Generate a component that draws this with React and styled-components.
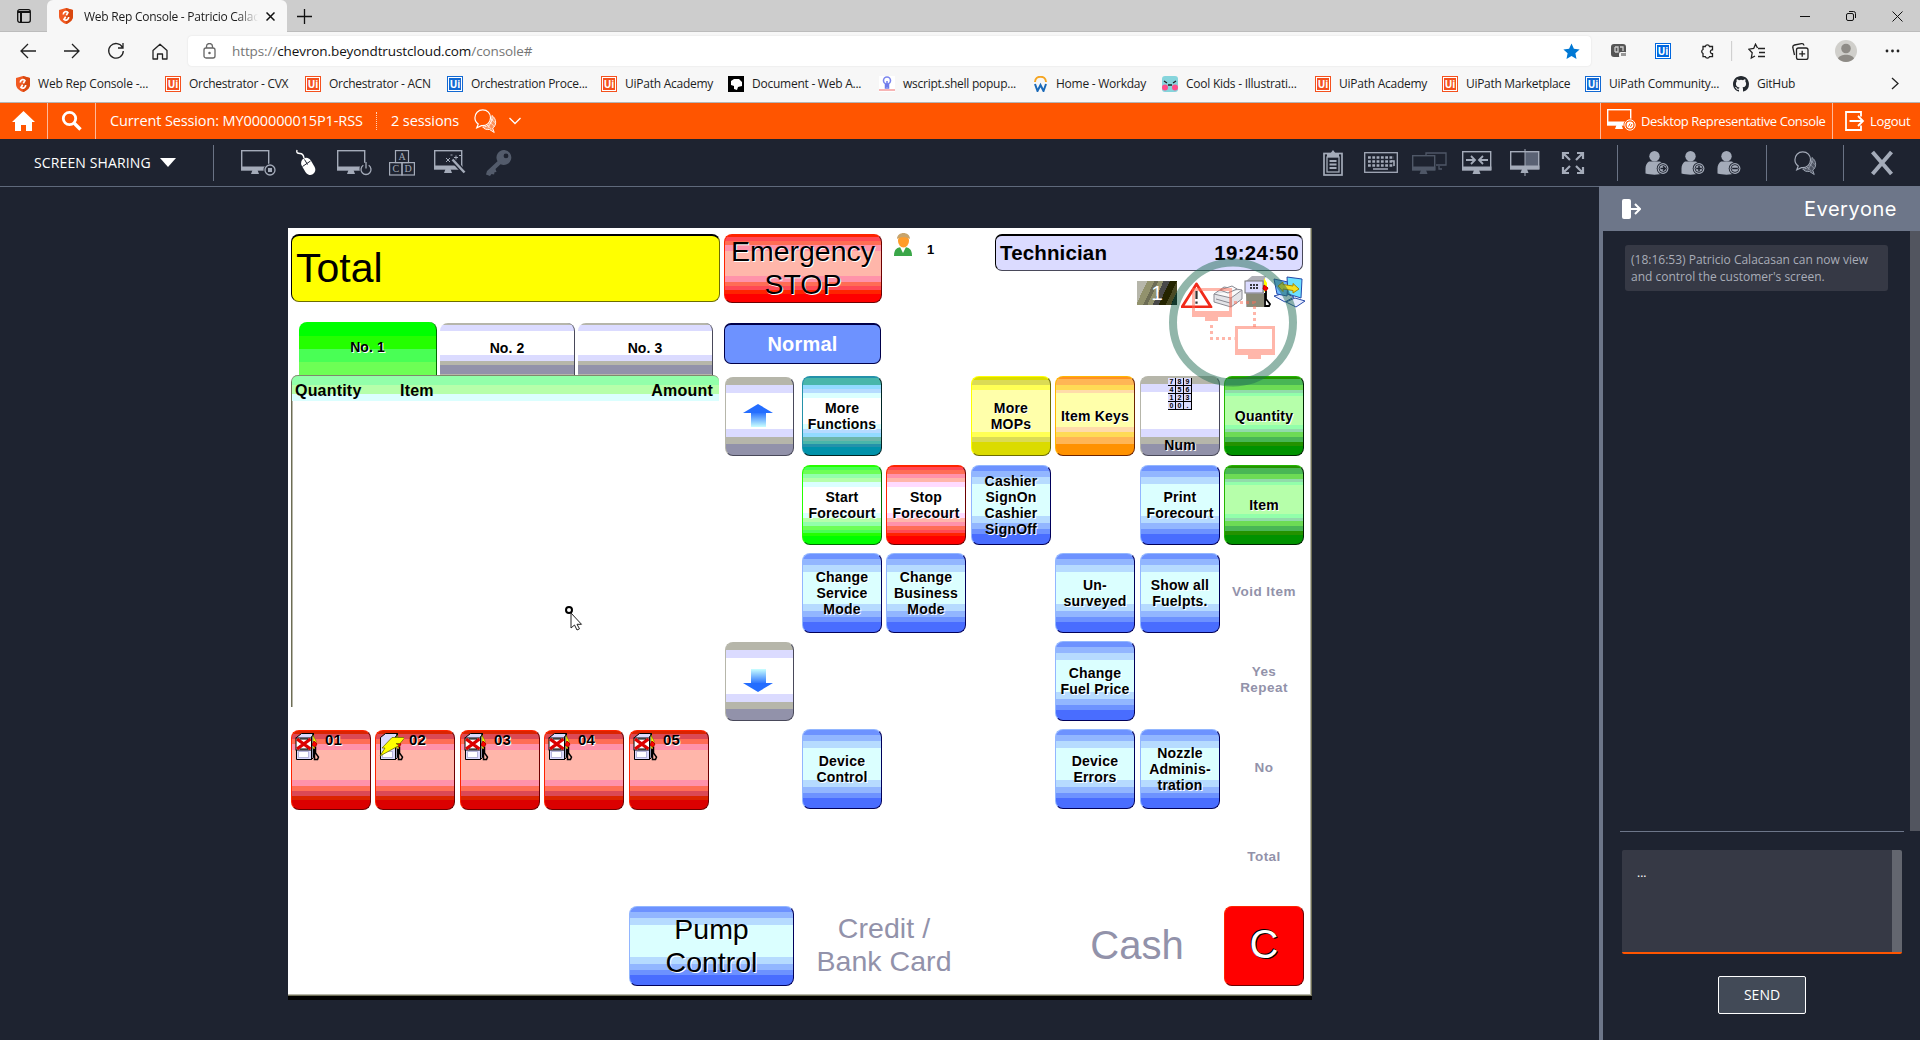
import React from "react";
import styled, { createGlobalStyle, css } from "styled-components";

const Global = createGlobalStyle`
  * { box-sizing: border-box; }
  html, body { margin: 0; padding: 0; background: #1e2330; }
  body { width: 1920px; height: 1040px; overflow: hidden; }
`;

const ui = `"Open Sans", "Noto Sans", sans-serif`;
const arial = `"Liberation Sans", Arial, sans-serif`;

const Page = styled.div`
  display: flex;
  flex-direction: column;
  width: 1920px;
  height: 1040px;
  overflow: hidden;
  font-family: ${ui};
  background: #1e2330;
`;

/* ---------- Browser chrome ---------- */
const TitleBar = styled.div`
  display: flex;
  align-items: flex-end;
  height: 32px;
  background: #cdcdcd;
  box-shadow: inset 0 -1px 0 #bcbcbc;
`;
const TabActions = styled.div`
  display: flex;
  align-items: center;
  justify-content: center;
  width: 47px;
  height: 32px;
`;
const Tab = styled.div`
  display: flex;
  align-items: center;
  width: 240px;
  height: 32px;
  padding: 0 11px 0 12px;
  background: #f7f7f7;
  border-radius: 6px 6px 0 0;
`;
const TabTitle = styled.div`
  width: 174px;
  margin: 0 8px 0 11px;
  white-space: nowrap;
  font-size: 12px;
  letter-spacing: -0.25px;
  color: #1b1b1b;
  mask-image: linear-gradient(90deg, #000 88%, transparent);
`;
const PlusWrap = styled.div`
  display: flex;
  align-items: center;
  height: 32px;
  margin-left: 10px;
`;
const WinControls = styled.div`
  display: flex;
  align-items: center;
  gap: 36px;
  height: 32px;
  margin-left: auto;
  padding-right: 17px;
`;
const NavBar = styled.div`
  display: flex;
  align-items: center;
  height: 38px;
  padding: 0 20px;
  background: #f7f7f7;
`;
const NavButtons = styled.div`
  display: flex;
  align-items: center;
  gap: 27px;
  width: 168px;
`;
const Address = styled.div`
  display: flex;
  align-items: center;
  width: 1403px;
  height: 30px;
  padding: 0 11px 0 15px;
  background: #fff;
  border-radius: 4px;
  box-shadow: 0 0 2px #ddd;
`;
const Url = styled.div`
  flex: 1;
  margin-left: 16px;
  font-size: 13.5px;
  letter-spacing: -0.1px;
  color: #767676;
  b { font-weight: 400; color: #111; }
`;
const Extensions = styled.div`
  display: grid;
  grid-template-columns: 44px 44px 32px 17px 44px 43px 50px 15px;
  align-items: center;
  padding-left: 20px;
`;
const Bookmarks = styled.div`
  display: flex;
  align-items: center;
  height: 33px;
  padding: 0 14px 5px 16px;
  background: #f7f7f7;
  border-bottom: 1px solid #b5b5b5;
`;
const Bookmark = styled.div`
  display: flex;
  align-items: center;
  gap: 8px;
  width: ${(p) => p.$w}px;
  flex: none;
  white-space: nowrap;
  font-size: 12px;
  letter-spacing: ${(p) => p.$ls || -0.25}px;
  color: #1d1d1d;
`;
const UiBadge = styled.div`
  display: flex;
  align-items: center;
  justify-content: center;
  width: 16px;
  height: 16px;
  flex: none;
  border: 1px solid ${(p) => p.$c};
  box-shadow: inset 0 0 0 1px #fff;
  background: ${(p) => p.$c};
  color: #fff;
  font: 700 10px/14px ${ui};
  letter-spacing: 0;
`;

/* ---------- Session bar ---------- */
const OrangeBar = styled.div`
  display: flex;
  align-items: stretch;
  height: 36px;
  background: #ff5500;
  color: #fff;
  font-size: 15px;
`;
const OrangeCell = styled.div`
  display: flex;
  align-items: center;
  justify-content: ${(p) => p.$justify || "center"};
  gap: ${(p) => p.$gap || 0}px;
  width: ${(p) => p.$w}px;
  padding-left: ${(p) => p.$pl || 0}px;
  margin-left: ${(p) => (p.$push ? "auto" : 0)};
  white-space: nowrap;
  font-size: ${(p) => p.$fs || 15}px;
  letter-spacing: ${(p) => p.$ls || 0}px;
  border-right: ${(p) => (p.$line ? "1px solid #ffb899" : "none")};
  border-left: ${(p) => (p.$lineLeft ? "1px solid #ffb899" : "none")};
  padding-bottom: 1px;
  svg { flex: none; overflow: visible; }
`;
const Dotted = styled.div`
  width: 1px;
  height: 18px;
  align-self: center;
  border-left: 1px dotted #ffd0b8;
`;

const ToolBar = styled.div`
  display: flex;
  align-items: center;
  height: 48px;
  border-bottom: 1px solid #5f697b;
  background: #1e2330;
  color: #a4abb9;
`;
const ModeLabel = styled.div`
  display: flex;
  align-items: center;
  gap: 9px;
  width: 213px;
  padding-left: 34px;
  font-size: 14px;
  letter-spacing: 0.12px;
  white-space: nowrap;
  color: #fff;
`;
const Caret = styled.div`
  border: 8px solid transparent;
  border-top: 9px solid #fff;
  border-bottom: 0;
`;
const Divider = styled.div`
  width: 1px;
  height: 36px;
  background: #6a7385;
`;
const ToolGroup = styled.div`
  display: flex;
  align-items: center;
  width: ${(p) => p.$w || "auto"};
  padding-left: ${(p) => p.$pl || 0}px;
  margin-left: ${(p) => (p.$push ? "auto" : 0)};
`;
const Tool = styled.div`
  display: flex;
  align-items: center;
  justify-content: center;
  width: ${(p) => p.$w}px;
  height: 36px;
  flex: none;
  color: ${(p) => p.$c || "#a4abb9"};
  svg { display: block; overflow: visible; }
`;

/* ---------- Main area ---------- */
const Main = styled.div`
  display: flex;
  flex: 1;
  min-height: 0;
`;
const Stage = styled.div`
  width: 1599px;
  padding: 41px 0 0 288px;
`;
const Screen = styled.div`
  position: relative;
  display: flex;
  flex-direction: column;
  width: 1024px;
  height: 772px;
  border-bottom: 4px solid #000;
  background: #fff;
  box-shadow: inset -1px -1px 0 #6d6d55, inset -2px -2px 0 #b6b6aa;
  font-family: ${arial};
  color: #000;
`;
const Header = styled.div`
  display: flex;
  height: 147px;
  padding: 6px 9px 0 3px;
`;
const HeadLeft = styled.div`
  display: flex;
  flex-direction: column;
  justify-content: space-between;
  width: 429px;
`;
const TotalBox = styled.div`
  display: flex;
  align-items: center;
  height: 68px;
  padding-left: 4px;
  border: 1px solid #6d6d00;
  border-top: 2px solid #000;
  border-left-color: #000;
  border-radius: 8px;
  background: #ffff00;
  font-size: 41px;
`;
const Tabs = styled.div`
  display: flex;
  align-items: flex-end;
  gap: 3px;
  padding-left: 8px;
`;

const stack = (list) =>
  "linear-gradient(180deg," +
  list
    .map(([c, to], i) => `${c} ${i ? list[i - 1][1] * 1.25 : 0}% ${to * 1.25}%`)
    .join(",") +
  ")";

/* Each band is [colour, end position on an 80px tall key]. */
const skins = {
  blue: {
    l: "#92b6ff", d: "#00005a",
    bg: stack([["#6d92ff", 6], ["#92b6ff", 12], ["#b6dbff", 19], ["#dbffff", 51], ["#b6dbff", 58], ["#92b6ff", 64], ["#6d92ff", 69], ["#496dff", 80]]),
  },
  teal: {
    l: "#2492aa", d: "#002424",
    bg: stack([["#2492aa", 2], ["#49b6aa", 9], ["#92dbff", 13], ["#b6dbff", 17], ["#dbffff", 22], ["#ffffff", 48], ["#dbffff", 53], ["#b6dbff", 57], ["#92dbff", 61], ["#6db6aa", 65], ["#49b6aa", 68], ["#2492aa", 71], ["#0092aa", 80]]),
  },
  lime: {
    l: "#24ff00", d: "#006d00",
    bg: stack([["#24ff00", 2], ["#49ff55", 5], ["#6dff55", 9], ["#92ffaa", 13], ["#b6ffaa", 17], ["#dbffff", 22], ["#ffffff", 48], ["#dbffff", 53], ["#b6ffaa", 57], ["#92ffaa", 61], ["#6dff55", 65], ["#49ff55", 68], ["#24ff00", 71], ["#00ff00", 80]]),
  },
  red: {
    l: "#ff2400", d: "#6d0000",
    bg: stack([["#ff2400", 2], ["#ff4955", 5], ["#ff6d55", 9], ["#ff92aa", 13], ["#ffb6aa", 17], ["#ffdbff", 22], ["#ffffff", 48], ["#ffdbff", 53], ["#ffb6aa", 57], ["#ff92aa", 61], ["#ff6d55", 65], ["#ff4955", 68], ["#ff2400", 71], ["#ff0000", 80]]),
  },
  alarm: {
    l: "#ff2400", d: "#6d0000",
    bg: stack([["#ff2400", 3], ["#ff4955", 8], ["#ff6d55", 13], ["#ff92aa", 20], ["#ffb6aa", 49], ["#ff92aa", 56], ["#ff6d55", 60], ["#ff4955", 65], ["#ff2400", 70], ["#ff0000", 80]]),
  },
  pump: {
    l: "#ff2400", d: "#6d0000",
    bg: stack([["#db2400", 4], ["#db4955", 9], ["#ff6d55", 14], ["#ff92aa", 20], ["#ffb6aa", 50], ["#ff92aa", 56], ["#ff6d55", 61], ["#db4955", 66], ["#db2400", 70], ["#db0000", 80]]),
  },
  yellow: {
    l: "#ffff00", d: "#6d6d00",
    bg: stack([["#dbdb00", 4], ["#dbdb55", 9], ["#ffff55", 14], ["#ffffaa", 56], ["#ffff55", 61], ["#dbdb55", 66], ["#dbdb00", 80]]),
  },
  orange: {
    l: "#ffb600", d: "#6d2400",
    bg: stack([["#ff9224", 3], ["#ffb655", 9], ["#ffdb55", 14], ["#ffdbaa", 17], ["#ffffaa", 51], ["#ffdbaa", 56], ["#ffdb55", 61], ["#ffb655", 68], ["#ff9200", 80]]),
  },
  gray: {
    l: "#b6b6aa", d: "#49495a",
    bg: stack([["#b6b6aa", 8], ["#dbdbff", 16], ["#ffffff", 53], ["#dbdbff", 61], ["#b6b6aa", 68], ["#9292aa", 80]]),
  },
  green: {
    l: "#24b600", d: "#002400",
    bg: stack([["#249200", 3], ["#49b655", 9], ["#6ddb55", 14], ["#92dbaa", 17], ["#92ffaa", 20], ["#b6ffaa", 49], ["#92ffaa", 53], ["#92dbaa", 56], ["#6ddb55", 61], ["#49b655", 66], ["#249200", 70], ["#009200", 80]]),
  },
  cancel: { l: "#ff2400", d: "#6d0000", bg: "#ff0000" },
};

const skinned = css`
  border: 1px solid;
  border-color: ${(p) => skins[p.$skin].l} ${(p) => skins[p.$skin].d}
    ${(p) => skins[p.$skin].d} ${(p) => skins[p.$skin].l};
  background: ${(p) => skins[p.$skin].bg};
  background-origin: border-box;
`;
const Key = styled.div`
  display: flex;
  flex-direction: column;
  align-items: center;
  justify-content: center;
  width: ${(p) => p.$w || 80}px;
  height: ${(p) => p.$h || 80}px;
  flex: none;
  grid-column: ${(p) => p.$col || "auto"};
  grid-row: ${(p) => p.$row || "auto"};
  padding-bottom: 1px;
  border-radius: 8px;
  text-align: center;
  white-space: pre;
  font: ${(p) => (p.$big ? "400 28.5px/33px" : "700 14px/16px")} ${arial};
  letter-spacing: ${(p) => (p.$big ? 0 : 0.2)}px;
  text-shadow: 1px 1px 0 #fff;
  ${skinned}
`;
const ArrowKey = styled(Key)`
  padding: 0 3px 3px 0;
`;
const CancelKey = styled(Key)`
  padding-bottom: 4px;
  font-size: 40px;
  color: #fff;
  text-shadow: 1px 1px 0 #000, -1px -1px 0 #000;
`;
const Ghost = styled.div`
  display: flex;
  align-items: center;
  justify-content: center;
  height: 80px;
  grid-column: ${(p) => p.$col};
  grid-row: ${(p) => p.$row};
  padding-right: ${(p) => (p.$size ? 5 : 0)}px;
  padding-bottom: 2px;
  text-align: center;
  white-space: pre;
  color: #9292aa;
  font: ${(p) => (p.$size ? "400 " + p.$size + "px/33px" : "700 13.5px/16px")} ${arial};
  letter-spacing: ${(p) => (p.$size ? 0.05 : 0.45)}px;
`;
const TabKey = styled.div`
  display: flex;
  align-items: center;
  justify-content: center;
  width: ${(p) => (p.$on ? 138 : 135)}px;
  height: ${(p) => (p.$on ? 53 : 52)}px;
  padding-bottom: 3px;
  font: 700 14px/16px ${arial};
  letter-spacing: 0.1px;
  border-radius: 8px 8px 0 0;
  border-right: 1px solid ${(p) => (p.$on ? "#006d00" : "#49495a")};
  background: ${(p) =>
    p.$on
      ? "linear-gradient(#00ff00 0 14px,#24ff00 14px 27px,#49ff55 27px 40px,#6dff55 40px)"
      : "linear-gradient(#b6b6aa 0 2px,#dbdbff 2px 8px,#fff 8px 32px,#dbdbff 32px 38px,#b6b6aa 38px 42px,#9292aa 42px 51px,#b6b6aa 51px)"};
  text-shadow: ${(p) => (p.$on ? "1px 1px 0 #fff" : "none")};
`;
const HeadMid = styled.div`
  display: flex;
  flex-direction: column;
  gap: 20px;
  width: 158px;
  margin-left: 4px;
`;
const ModeBox = styled.div`
  display: flex;
  align-items: center;
  justify-content: center;
  width: 157px;
  height: 41px;
  padding-bottom: 1px;
  border: 1px solid #000049;
  border-top-width: 2px;
  border-radius: 7px;
  background: #6d92ff;
  color: #fff;
  font: 700 20px/24px ${arial};
  letter-spacing: 0.2px;
`;
const Operator = styled.div`
  display: flex;
  align-items: flex-start;
  gap: 15px;
  width: 100px;
  margin: -1px 0 0 12px;
  font: 700 13px/16px ${arial};
  span { padding-top: 9px; }
`;
const HeadRight = styled.div`
  display: flex;
  flex-direction: column;
  width: 308px;
  margin-left: 1px;
`;
const UserBox = styled.div`
  display: flex;
  align-items: center;
  justify-content: space-between;
  width: 308px;
  height: 37px;
  padding: 0 3px 1px 4px;
  border: 1px solid #49495a;
  border-top: 2px solid #000;
  border-left-color: #000;
  border-radius: 7px;
  background: #dbdbff;
  font: 700 20.5px/24px ${arial};
  letter-spacing: 0.15px;
`;
const Clock = styled.span`
  letter-spacing: 0.35px;
`;
const StatusRow = styled.div`
  display: flex;
  align-items: flex-end;
  justify-content: flex-end;
  height: 37px;
  margin: 0 -2px 0 0;
  padding-top: 4px;
  svg { flex: none; display: block; }
`;
const CounterChip = styled.div`
  width: 40px;
  height: 24px;
  margin: 0 4px 3px 0;
  background: linear-gradient(115deg, #b6b6aa 0 20%, #92926d 20% 34%, #6d6d55 34% 42%, #92926d 42% 52%, #494949 52% 64%, #242400 64% 78%, #494924 78% 88%, #000 88%);
  color: #fff;
  text-align: center;
  font: 400 21px/24px ${arial};
`;

const Body = styled.div`
  display: flex;
  flex: 1;
  padding: 0 8px 0 3px;
`;
const LeftHalf = styled.div`
  display: flex;
  flex-direction: column;
  width: 503px;
  margin-right: 8px;
`;
const ReceiptRow = styled.div`
  display: flex;
  gap: 6px;
  height: 355px;
`;
const Receipt = styled.div`
  width: 428px;
  height: 332px;
  border-left: 1px solid #6d6d55;
  box-shadow: inset 1px 0 0 #b6b6aa;
  border-radius: 7px 0 0 0;
`;
const ReceiptHead = styled.div`
  display: flex;
  align-items: center;
  height: 26px;
  padding: 5px 6px 0 3px;
  border-radius: 6px 6px 0 0;
  background: linear-gradient(#92ffaa 0 9px, #b6ffaa 9px 18px, #dbffff 18px);
  border-top: 1px solid #7f8a6d;
  font: 700 16px/18px ${arial};
  letter-spacing: 0.2px;
`;
const HeadCell = styled.div`
  width: ${(p) => p.$w || "auto"};
  margin-left: ${(p) => (p.$end ? "auto" : 0)};
`;
const Scrollers = styled.div`
  display: flex;
  flex-direction: column;
  justify-content: space-between;
  height: 346px;
  padding-top: 2px;
`;
const PumpRow = styled.div`
  display: grid;
  grid-template-columns: 84px 85px 84px 85px 80px;
  height: 176px;
`;
const PumpKey = styled(Key)`
  flex-direction: row;
  justify-content: flex-start;
  align-items: flex-start;
  padding: 1px 0 0 3px;
  font-size: 15px;
  gap: 5px;
`;
const PumpFooter = styled.div`
  display: flex;
  justify-content: flex-end;
`;
const Keypad = styled.div`
  display: grid;
  grid-template-columns: 84px 85px 84px 85px 84px 80px;
  grid-template-rows: 89px 88px 88px 88px 89px 88px 80px;
  padding-top: 1px;
`;
const NumKey = styled(Key)`
  justify-content: space-between;
  padding: 1px 0 2px;
`;

const Halo = styled.svg`
  position: absolute;
  left: 881px;
  top: 30px;
`;
const Pointer = styled.svg`
  position: absolute;
  left: 276px;
  top: 377px;
`;

/* ---------- Chat ---------- */
const Chat = styled.div`
  display: flex;
  flex-direction: column;
  width: 321px;
  margin-top: -1px;
  border-left: 4px solid #6d7689;
`;
const ChatHead = styled.div`
  display: flex;
  align-items: center;
  justify-content: space-between;
  height: 45px;
  padding: 0 23px 0 19px;
  background: #6d7689;
  color: #fff;
  font: 400 20px/24px Inter, ${ui};
`;
const ChatTitle = styled.span`
  letter-spacing: 0.55px;
`;
const ChatLog = styled.div`
  height: 600px;
  padding: 14px 22px 0 22px;
  border-right: 10px solid #52555f;
`;
const Message = styled.div`
  width: 263px;
  height: 46px;
  padding: 6px 6px;
  border-radius: 3px;
  background: #363945;
  color: #a9adb8;
  font-size: 12px;
  line-height: 17px;
  white-space: pre;
`;
const Rule = styled.div`
  width: 284px;
  height: 1px;
  margin-left: 17px;
  background: #6d7689;
`;
const Composer = styled.div`
  width: 280px;
  height: 104px;
  margin: 18px 0 22px 19px;
  padding: 14px 15px;
  background: linear-gradient(90deg, #363945 270px, #63666f 270px);
  border-bottom: 2px solid #ff5500;
  border-radius: 2px;
  color: #fff;
  font-size: 12px;
  line-height: 17px;
`;
const Send = styled.button`
  width: 88px;
  height: 38px;
  margin-left: 115px;
  padding: 0;
  border: 1px solid #fff;
  border-radius: 2px;
  background: #424a57;
  color: #fff;
  font: 400 14px/20px ${ui};
  letter-spacing: 0;
`;

/* ---------- Icons ---------- */
const S = ({ w, h, vb, children, ...r }) => (
  <svg width={w} height={h} viewBox={vb || `0 0 ${w} ${h}`} fill="none" stroke="currentColor" strokeWidth="1.3" {...r}>
    {children}
  </svg>
);
const Shield = ({ w = 14 }) => (
  <S w={w} h={16} vb={`0 0 ${w} 16`} stroke="none">
    <path d="M7 0 14 2v6c0 4-3 6.500-7 8-4-1.500-7-4-7-8V2z" fill="#f15a22" />
    <path d="M7 0 14 2v6c0 4-3 6.500-7 8z" fill="#d9480f" />
    <path d="M4.300 6.500c0-2.800 3-3.800 4.600-2L7.300 7.300M9.700 9c0 2.900-3 4-4.700 2.300l1.700-2.500" stroke="#fff" strokeWidth="1.700" fill="none" />
  </S>
);
const Monitor = ({ x = 0, y = 0, w = 28, h = 19 }) => (
  <g>
    <rect x={x + 0.7} y={y + 0.7} width={w} height={h} strokeWidth="1.400" />
    <path d={`M${x} ${y + h - 2.500}h${w + 1.400}v4h-${w + 1.400}z`} fill="currentColor" stroke="none" />
    <path d={`M${x + w / 2 - 2} ${y + h + 1}h5l1.500 4h-8z`} fill="currentColor" stroke="none" />
  </g>
);
const ChatIcon = ({ c }) => (
  <S w={23} h={24} vb="0 0 25 26" color={c}>
    <path d="M9.500 1C4.500 1 1 4.800 1 9.500c0 3 1.400 5.300 3.600 6.700L3 20.500l5-2.500c6 .6 10-3.500 10-8.500S14.500 1 9.500 1z" />
    <path d="M19.500 7c5.500 4 5 11 .8 13.700l1.700 4.800-5.200-3.300c-3 .5-6-.6-7.300-2.700 6 .2 10.500-4.500 10-12.500z" fill="currentColor" fillOpacity=".35" strokeWidth="1" />
    <path d="M14 17l5 5M17 14l5 5M19 11l4 4M15 21l6-11" strokeWidth=".7" />
  </S>
);
const Person = ({ children }) => (
  <S w={26} h={26}>
    <circle cx="9.500" cy="6.200" r="5.200" fill="currentColor" stroke="none" />
    <path d="M4 11.500h11c2.300 1.400 3.500 4 3.500 7v5c-5 1.500-13 1.500-18 0v-5c0-3 1.200-5.600 3.500-7z" fill="currentColor" stroke="none" />
    <circle cx="18" cy="18.500" r="6.300" fill="#1e2330" stroke="none" />
    <circle cx="18" cy="18.500" r="5.400" fill="#a4abb9" stroke="none" />
    <circle cx="18" cy="18.500" r="3.900" fill="#a4abb9" stroke="#1e2330" strokeWidth=".9" />
    <g stroke="#1e2330" strokeWidth="1.500">{children}</g>
  </S>
);
const PumpIcon = ({ bolt }) => (
  <S w={25} h={29} stroke="#000" strokeWidth="1">
    <path d="M1.500 5.500l5-4h12l-2 4v22h-15z" fill="#dbdbff" />
    <path d="M16.500 5.500l2-4v24l-2 2z" fill="#9292aa" />
    <rect x="3.500" y="19.500" width="10" height="6" stroke="#b6b6db" fill="#fff" />
    <path d="M18 3l3 6v6l-3 2z" fill="#ffff00" stroke="#6d6d00" strokeWidth=".6" />
    <path d="M19 9l3 3-2 3-3-2z" fill="#ff0000" stroke="#b60000" />
    <path d="M20.500 15v6l3 4-1 2.500h-3V17" strokeWidth="1.500" />
    {bolt ? (
      <path d="M13 5.500h13l-5 6h-4l3 2L1 24l5-8H3z" fill="#ffff00" stroke="#6d6d00" strokeWidth=".8" />
    ) : (
      <g>
        <rect x="1" y="6" width="15.500" height="12" fill="#fff" />
        <path d="M2 7l13.500 10M15.500 7L2 17" stroke="#db0000" strokeWidth="3.400" />
        <path d="M5 7h8M5 17h8" stroke="#000" strokeWidth="1" />
      </g>
    )}
  </S>
);
const Arrow = ({ down }) => (
  <S w={30} h={23} stroke="none">
    <defs>
      <linearGradient id="fade" x1="0" y1="0" x2="0" y2="1">
        <stop offset="0" stopColor="#246dff" /><stop offset="1" stopColor="#c8ffff" />
      </linearGradient>
    </defs>
    <g transform={down ? "matrix(1 0 0 -1 0 23)" : undefined}>
      <rect x="8" y="8" width="15" height="15" fill="url(#fade)" />
      <path d="M0 9L15 0l15 9z" fill="#246dff" />
    </g>
  </S>
);

const bookmarks = [
  [149, "bt", "Web Rep Console -...", -0.2],
  [140, "#f4511e", "Orchestrator - CVX"],
  [142, "#f4511e", "Orchestrator - ACN"],
  [154, "#1269d3", "Orchestration Proce..."],
  [127, "#f4511e", "UiPath Academy"],
  [151, "doc", "Document - Web A..."],
  [153, "bulb", "wscript.shell popup..."],
  [130, "work", "Home - Workday"],
  [153, "kid", "Cool Kids - Illustrati..."],
  [127, "#f4511e", "UiPath Academy"],
  [143, "#f4511e", "UiPath Marketplace", -0.3],
  [148, "#1269d3", "UiPath Community..."],
  [148, "git", "GitHub"],
];
const Favicon = ({ kind }) => {
  if (kind[0] === "#") return <UiBadge $c={kind}>Ui</UiBadge>;
  if (kind === "bt") return <Shield />;
  if (kind === "doc")
    return (<S w={16} h={16} stroke="none"><rect width="16" height="16" fill="#000" /><path d="M3 5l3-2 5 0 3 3v4l-4 1-1 3-3-1 0-3-3-1z" fill="#fff" /></S>);
  if (kind === "bulb")
    return (<S w={16} h={16}><rect width="16" height="16" fill="#fff" stroke="none" /><circle cx="8" cy="4.500" r="3.500" stroke="#7b86ee" strokeWidth="1.600" /><path d="M6.500 8v4h3V8M8 5v6" stroke="#6f7bea" strokeWidth="1.500" /><path d="M0 14h16" stroke="#f5a3a3" strokeWidth="1.600" /></S>);
  if (kind === "work")
    return (<S w={16} h={16}><path d="M3 6c0-7 11-7 11 0" stroke="#f5a623" strokeWidth="2" /><path d="M3 8l2.500 7L8.500 9l3 6L14 8" stroke="#1a69b8" strokeWidth="2" /></S>);
  if (kind === "kid")
    return (<S w={16} h={16} stroke="none"><rect width="16" height="16" rx="3" fill="#86d5dc" /><circle cx="3" cy="11.500" r="3" fill="#ff4f8b" /><circle cx="13" cy="11.500" r="3" fill="#ff4f8b" /><path d="M2 5l3 2M14 5l-3 2M6 9h4" stroke="#222" strokeWidth="1.300" /></S>);
  return (
    <S w={16} h={16} stroke="none"><path fill="#24292f" d="M8 0C3.580 0 0 3.580 0 8c0 3.540 2.290 6.530 5.470 7.590.4.070.55-.17.55-.38 0-.19-.01-.82-.01-1.490-2.010.37-2.530-.49-2.690-.94-.09-.23-.48-.94-.82-1.130-.28-.15-.68-.52-.01-.53.63-.01 1.080.58 1.230.82.72 1.210 1.870.87 2.330.66.07-.52.28-.87.51-1.070-1.780-.2-3.640-.89-3.640-3.950 0-.87.31-1.590.82-2.150-.08-.2-.36-1.020.08-2.120 0 0 .67-.21 2.200.82a7.600 7.600 0 014 0c1.530-1.040 2.200-.82 2.200-.82.44 1.100.16 1.920.08 2.120.51.56.82 1.270.82 2.150 0 3.070-1.870 3.750-3.650 3.950.29.25.54.73.54 1.480 0 1.070-.01 1.930-.01 2.200 0 .21.15.46.55.38A8.010 8.010 0 0016 8c0-4.420-3.580-8-8-8z" /></S>
  );
};

const keys = [
  [1, 1, "teal", "More\nFunctions"], [3, 1, "yellow", "More\nMOPs"], [4, 1, "orange", "Item Keys"],
  [6, 1, "green", "Quantity"], [1, 2, "lime", "Start\nForecourt"], [2, 2, "red", "Stop\nForecourt"],
  [3, 2, "blue", "Cashier\nSignOn\nCashier\nSignOff"], [5, 2, "blue", "Print\nForecourt"], [6, 2, "green", "Item"],
  [1, 3, "blue", "Change\nService\nMode"], [2, 3, "blue", "Change\nBusiness\nMode"], [4, 3, "blue", "Un-\nsurveyed"],
  [5, 3, "blue", "Show all\nFuelpts."], [4, 4, "blue", "Change\nFuel Price"], [1, 5, "blue", "Device\nControl"],
  [4, 5, "blue", "Device\nErrors"], [5, 5, "blue", "Nozzle\nAdminis-\ntration"],
];
const ghosts = [[3, "Void Item"], [4, "Yes\nRepeat"], [5, "No"], [6, "Total"]];

const PadDigit = styled.text`
  font: 700 7px ${arial};
  text-shadow: none;
  letter-spacing: 0;
`;
const NumPad = () => (
  <S w={24} h={32} stroke="none">
    <rect width="24" height="32" fill="#000" />
    {["7", "8", "9", "4", "5", "6", "1", "2", "3", "0", "0", "."].map((t, i) => {
      const x = (i % 3) * 8, y = Math.floor(i / 3) * 8;
      return (
        <g key={i}>
          <rect x={x} y={y} width="7" height="7" fill="#dbdbff" />
          <PadDigit x={x + 3.5} y={y + 6} textAnchor="middle" fill="#000">{t}</PadDigit>
        </g>
      );
    })}
  </S>
);

const Chrome = () => (
  <>
    <TitleBar>
      <TabActions>
        <S w={14} h={14} stroke="#111"><rect x=".7" y=".7" width="12.600" height="12.600" rx="2" /><path d="M1 3h12M4 3v10" strokeWidth="2" /></S>
      </TabActions>
      <Tab>
        <Shield />
        <TabTitle>Web Rep Console - Patricio Calac</TabTitle>
        <S w={9} h={9} stroke="#111" strokeWidth="1.500"><path d="M.5.5l8 8M8.500.5l-8 8" /></S>
      </Tab>
      <PlusWrap><S w={15} h={15} stroke="#111"><path d="M7.500 0v15M0 7.500h15" /></S></PlusWrap>
      <WinControls>
        <S w={10} h={10} stroke="#111" strokeWidth="1"><path d="M0 5.500h10" /></S>
        <S w={10} h={10} stroke="#111" strokeWidth="1"><rect x=".5" y="2.500" width="7" height="7" rx="1.500" /><path d="M3 .5h4.500a2 2 0 012 2V7" /></S>
        <S w={11} h={11} stroke="#111" strokeWidth="1"><path d="M.5.5l10 10M10.500.5l-10 10" /></S>
      </WinControls>
    </TitleBar>
    <NavBar>
      <NavButtons>
        <S w={16} h={16} stroke="#222"><path d="M16 8H1M8 1L1 8l7 7" /></S>
        <S w={17} h={16} stroke="#222"><path d="M1 8h15M9 1l7 7-7 7" /></S>
        <S w={18} h={18} stroke="#222"><path d="M15.500 5.500A7.300 7.300 0 1016.300 9M16 1v5h-5" /></S>
        <S w={16} h={17} stroke="#222"><path d="M1 7.500L8 1.200l7 6.300V16h-4.500v-5h-5v5H1z" strokeLinejoin="round" /></S>
      </NavButtons>
      <Address>
        <S w={13} h={16} stroke="#666"><rect x="1" y="5" width="11" height="10" rx="2" /><path d="M3.500 5V3.500a3 3 0 016 0V5" /><circle cx="6.500" cy="10" r=".6" fill="#666" /></S>
        <Url>https://<b>chevron.beyondtrustcloud.com</b>/console#</Url>
        <S w={17} h={17} vb="0 0 17 16" stroke="none"><path fill="#0078d4" d="M8.500 0l2.400 5.200 5.700.7-4.200 3.900 1.100 5.600-5-2.800-5 2.800 1.100-5.600L.4 5.900l5.700-.7z" /></S>
      </Address>
      <Extensions>
        <S w={16} h={16} stroke="none"><rect x="0" y="1" width="15" height="13" rx="3" fill="#555" /><path d="M4 4v5M4 4h3v5H4M9 4h3v4" stroke="#ccc" strokeWidth="1.300" /><rect x="8" y="9" width="8" height="6" rx="2" fill="#f7f7f7" /><rect x="10" y="10" width="5" height="3" fill="#999" /></S>
        <UiBadge $c="#0067df">Ui</UiBadge>
        <S w={16} h={16} stroke="#222"><path d="M4 3.500h2.300a2.200 2.200 0 014.200 0H13.500v3.300h-.8a2 2 0 000 3.800h.8v3h-3a2.200 2.200 0 01-4.200 0H4v-3.100a2.200 2.200 0 010-4z" /></S>
        <S w={2} h={20} stroke="#d0d0d0"><path d="M.5 0v20" /></S>
        <S w={17} h={17} stroke="#222"><path d="M9.500 5L7.500 1.200 5.700 5.500.8 6.200l3.400 3.600L3.300 15l3.700-2M10 5.500h7M11 9.500h6M10 13.500h7" /></S>
        <S w={17} h={17} stroke="#222"><path d="M2.500 12L.8 4.500A2.200 2.200 0 012.500 2l7-1.300A2.200 2.200 0 0112 2.500" /><rect x="4.500" y="5" width="11.500" height="11.500" rx="2" /><path d="M10.200 7.800v6M7.200 10.800h6" /></S>
        <S w={22} h={22} stroke="none"><circle cx="11" cy="11" r="11" fill="#d0cfcb" /><circle cx="11" cy="8.500" r="4.800" fill="#8e8b86" /><path d="M3 18.500c2-5 14-5 16 0a11 11 0 01-16 0z" fill="#8e8b86" /></S>
        <S w={15} h={4} stroke="none"><g fill="#222"><circle cx="2" cy="2" r="1.400" /><circle cx="7.500" cy="2" r="1.400" /><circle cx="13" cy="2" r="1.400" /></g></S>
      </Extensions>
    </NavBar>
    <Bookmarks>
      {bookmarks.map(([w, kind, label, ls], i) => (
        <Bookmark key={i} $w={w} $ls={ls}><Favicon kind={kind} />{label}</Bookmark>
      ))}
      <S w={8} h={13} stroke="#222" style={{ marginLeft: 10 }}><path d="M1 1l6 5.500L1 12" /></S>
    </Bookmarks>
  </>
);

const SessionBars = () => (
  <>
    <OrangeBar>
      <OrangeCell $w={48} $line><S w={23} h={20} stroke="none"><path fill="#fff" d="M11.500 0L0 11h3v9h6v-6h5v6h6v-9h3z" /></S></OrangeCell>
      <OrangeCell $w={48} $line><S w={21} h={21} stroke="#fff"><circle cx="8.500" cy="8.500" r="6.200" strokeWidth="2.800" /><path d="M13 13l6.500 6.500" strokeWidth="3.400" /></S></OrangeCell>
      <OrangeCell $w={280} $pl={14} $justify="flex-start" $fs={14.5} $ls={-0.12}>Current Session: MY000000015P1-RSS</OrangeCell>
      <Dotted />
      <OrangeCell $w={160} $pl={14} $justify="flex-start" $gap={15} $fs={14.5} $ls={-0.1}>
        2 sessions
        <ChatIcon c="#fff" />
        <S w={12} h={8} stroke="#fff" style={{ marginLeft: -3 }}><path d="M.5 1L6 6.500 11.500 1" /></S>
      </OrangeCell>
      <OrangeCell $push $w={232} $pl={6} $lineLeft $justify="flex-start" $gap={3} $fs={13} $ls={-0.4}>
        <S w={31} h={24} color="#fff"><Monitor w={23} h={15} /><circle cx="23" cy="16" r="6.500" fill="#ff5500" stroke="none" /><circle cx="23" cy="16" r="5.200" strokeWidth="1" /><circle cx="23" cy="16" r="3.400" fill="#fff" stroke="none" /><path d="M21.500 17.500l1.500-3M23.500 18l1.500-3" stroke="#ff5500" strokeWidth="1" /></S>
        Desktop Representative Console
      </OrangeCell>
      <OrangeCell $w={88} $pl={12} $lineLeft $justify="flex-start" $gap={6} $fs={13} $ls={-0.3}>
        <S w={19} h={20} stroke="#fff" strokeWidth="1.800"><path d="M16 5.500V1H1v18h15v-4.500M4.500 10H18M13 5l5 5-5 5" /></S>
        Logout
      </OrangeCell>
    </OrangeBar>
    <ToolBar>
      <ModeLabel>SCREEN SHARING <Caret /></ModeLabel>
      <Divider />
      <ToolGroup $pl={20}>
        <Tool $w={48}><S w={35} h={26}><Monitor w={27} /><circle cx="29" cy="20" r="6.500" fill="#1e2330" stroke="none" /><circle cx="29" cy="20" r="5" /><rect x="27" y="18" width="4" height="4" fill="currentColor" stroke="none" /></S></Tool>
        <Tool $w={48} $c="#fff"><S w={21} h={28}><path d="M1 1c-1 3 1 3.500 3 3.500S7.500 6 8 9" strokeWidth="1.400" /><rect x="7" y="8.500" width="10.500" height="18" rx="5.200" transform="rotate(-30 12 17.500)" fill="#fff" stroke="none" /><path d="M6.500 17.500l8-5.500M8.500 10.500l3 5" stroke="#1e2330" strokeWidth="1" /></S></Tool>
        <Tool $w={48}><S w={35} h={26}><Monitor w={27} /><circle cx="29" cy="19" r="6.500" fill="#1e2330" stroke="none" /><path d="M26.300 15.300a5 5 0 105.400 0M29 12v6.500" /></S></Tool>
        <Tool $w={48}><S w={26} h={26} strokeWidth="1.200"><rect x="6.500" y=".6" width="13" height="12" /><rect x=".6" y="12.600" width="12.400" height="12.400" /><rect x="13" y="12.600" width="12.400" height="12.400" /><g fill="currentColor" stroke="none" fontFamily="Liberation Serif" fontSize="10" textAnchor="middle"><text x="13" y="10">A</text><text x="6.800" y="22">C</text><text x="19.200" y="22">D</text></g></S></Tool>
        <Tool $w={48}><S w={32} h={25}><Monitor w={27} h={18} /><path d="M18 9l13 14" stroke="#1e2330" strokeWidth="5" /><path d="M18.500 9.500l12 13" strokeWidth="2.500" /><path d="M12 8l4 4M16 8l-4 4M22 5.500v4M20 7.500h4M25 5.500h2M16.500 5h2" strokeWidth="1" /></S></Tool>
        <Tool $w={50} $c="#535b6b"><S w={26} h={26} stroke="none"><path fill="currentColor" fillRule="evenodd" d="M18.500 0a7.500 7.500 0 11-4 14.200L9.500 19l1 3-2 .3-.4 2.300-2.600-.5L4 26 0 24.500 1 21l10.500-9.800A7.500 7.500 0 0118.500 0zm1.500 3.500a2.400 2.400 0 100 4.800 2.400 2.400 0 000-4.800z" /></S></Tool>
      </ToolGroup>
      <ToolGroup $push $w="308px">
        <Tool $w={48}><S w={20} h={26}><rect x="1" y="3.500" width="18" height="21.500" strokeWidth="1.700" /><rect x="4" y="7" width="12" height="15" /><path d="M4 7V4h3l3-4 3 4h3v3z" fill="currentColor" stroke="none" /><path d="M6.500 11h7M6.500 14.500h7M6.500 18h7" strokeWidth="1.800" /></S></Tool>
        <Tool $w={48}><S w={34} h={21}><rect x=".7" y=".7" width="32.600" height="19.600" /><path d="M4 5.500h26M4 9.500h26" strokeWidth="2.600" strokeDasharray="2.800 1.500" /><path d="M4 13.500h26" strokeWidth="2.600" strokeDasharray="2.800 1.500" /><path d="M9 17h15M27 9h3v5" strokeWidth="1.600" /></S></Tool>
        <Tool $w={48} $c="#4f5767"><S w={35} h={22}><path d="M14 3V1h20v12H24M27 14v3h3" /><Monitor y={3} w={22} h={14} /></S></Tool>
        <Tool $w={48}><S w={30} h={24}><Monitor w={28} h={18} /><path d="M4 9h8M9 5l4 4-4 4M26 9h-8M21 5l-4 4 4 4" strokeWidth="1.800" /></S></Tool>
        <Tool $w={48}><S w={30} h={28}><rect x="15" y="3" width="14" height="16" fill="#5a6274" stroke="none" /><g transform="translate(0 2)"><Monitor w={28} h={17} /></g><path d="M15 0v27" strokeWidth="1" /></S></Tool>
        <Tool $w={48}><S w={22} h={22} strokeWidth="2.200"><path d="M8 8L2 2M1 7V1h6M14 8l6-6M15 1h6v6M8 14l-6 6M1 15v6h6M14 14l6 6M21 15v6h-6" /></S></Tool>
      </ToolGroup>
      <Divider />
      <ToolGroup $w="148px" $pl={22}>
        <Tool $w={36}><Person><path d="M15.500 18.500h4.500M18 16.200l2.300 2.300-2.300 2.300" /></Person></Tool>
        <Tool $w={36}><Person><path d="M15.200 18.500h5.600M18 15.700v5.600" /></Person></Tool>
        <Tool $w={36}><Person><path d="M15.200 18.500h5.600" /></Person></Tool>
      </ToolGroup>
      <Divider />
      <Tool $w={76}><ChatIcon c="#a4abb9" /></Tool>
      <Divider />
      <Tool $w={76}><S w={22} h={22} strokeWidth="4"><path d="M1.500 0l19 22M20.500 0l-19 22" /></S></Tool>
    </ToolBar>
  </>
);

const StatusIcons = () => (
  <StatusRow>
    <CounterChip>1</CounterChip>
    <S w={32} h={26} stroke="none"><path d="M15.500 2L30 25H1z" fill="#fff" stroke="#f02a1a" strokeWidth="2.800" strokeLinejoin="round" /><path d="M15.500 9v8M15.500 19.500v2.200" stroke="#333" strokeWidth="2.200" /></S>
    <S w={31} h={26} stroke="#8a8a92" strokeWidth="1"><path d="M1 12l10-7 18 3v9l-11 8L1 20z" fill="#e4e4e8" /><path d="M1 12l17 4 11-8M18 16v9M7 8l12-4 5 3-9 4z" fill="#fafafa" /><path d="M3 17l14 4" /></S>
    <S w={29} h={32} stroke="#000" strokeWidth="1"><path d="M2 5L8 0h14l-2 5v26H2z" fill="#b0b0b8" stroke="none" /><rect x="1" y="5" width="18" height="12" fill="#dbdbff" stroke="#777" /><path d="M6 9h9M6 12h9" strokeDasharray="2 1" strokeWidth="1.500" /><path d="M2 18h18v13H3z" fill="#8a8a78" stroke="none" /><path d="M20 2l3 5v7l-3 2z" fill="#ffff00" stroke="none" /><path d="M20 9l4 3-2 3-3-2z" fill="#f00" stroke="#b00" /><path d="M22 15v8l4 5-1 2h-4V17" strokeWidth="1.800" /></S>
    <S w={32} h={32} stroke="#2448a8" strokeWidth="1"><path d="M1 20l11-3 9 4-9 5zM13 26l9-4 10 3-9 6z" fill="#e8ecff" /><path d="M1 3l14 3-1 14-10-2z" fill="#6db6ff" /><path d="M14 1l15 2-1 19-13-4z" fill="#6de0ff" /><path d="M5 10l5-4v2.500l10 1.500V7.500l6 5.500-6 4v-2.500L10 13v2.500z" fill="#f5e024" stroke="#a88a00" /></S>
  </StatusRow>
);

const PosScreen = () => (
  <Screen>
    <Header>
      <HeadLeft>
        <TotalBox>Total</TotalBox>
        <Tabs><TabKey $on>No. 1</TabKey><TabKey>No. 2</TabKey><TabKey>No. 3</TabKey></Tabs>
      </HeadLeft>
      <HeadMid>
        <Key $skin="alarm" $big $w={158} $h={69}>{"Emergency\nSTOP"}</Key>
        <ModeBox>Normal</ModeBox>
      </HeadMid>
      <Operator>
        <S w={18} h={23} stroke="none"><path d="M0 23c0-7 3-9 9-9s9 2 9 9z" fill="#3aa648" /><path d="M6 14l3 6 3-6z" fill="#fff" /><ellipse cx="9.500" cy="8" rx="5.500" ry="6.500" fill="#ff9c2a" /><path d="M3 6c0-8 13-8 13 0-3-2.500-10-2.500-13 0z" fill="#c7a46c" /></S>
        <span>1</span>
      </Operator>
      <HeadRight>
        <UserBox><span>Technician</span><Clock>19:24:50</Clock></UserBox>
        <StatusIcons />
      </HeadRight>
    </Header>
    <Body>
      <LeftHalf>
        <ReceiptRow>
          <Receipt>
            <ReceiptHead>
              <HeadCell $w="105px">Quantity</HeadCell><HeadCell>Item</HeadCell><HeadCell $end>Amount</HeadCell>
            </ReceiptHead>
          </Receipt>
          <Scrollers>
            <ArrowKey $skin="gray" $w={69} $h={79}><Arrow /></ArrowKey>
            <ArrowKey $skin="gray" $w={69} $h={79}><Arrow down /></ArrowKey>
          </Scrollers>
        </ReceiptRow>
        <PumpRow>
          {["01", "02", "03", "04", "05"].map((n, i) => (
            <PumpKey key={n} $skin="pump"><PumpIcon bolt={i === 1} /><span>{n}</span></PumpKey>
          ))}
        </PumpRow>
        <PumpFooter><Key $skin="blue" $big $w={165}>{"Pump\nControl"}</Key></PumpFooter>
      </LeftHalf>
      <Keypad>
        {keys.map(([c, r, skin, label]) => (
          <Key key={c + "-" + r} $col={c} $row={r} $skin={skin}>{label}</Key>
        ))}
        <NumKey $col={5} $row={1} $skin="gray"><NumPad />Num</NumKey>
        {ghosts.map(([r, label]) => <Ghost key={r} $col={6} $row={r}>{label}</Ghost>)}
        <Ghost $col="1 / 3" $row={7} $size={28.5}>{"Credit /\nBank Card"}</Ghost>
        <Ghost $col="4 / 6" $row={7} $size={40}>Cash</Ghost>
        <CancelKey $col={6} $row={7} $skin="cancel" $big>C</CancelKey>
      </Keypad>
    </Body>
    <Halo width="128" height="129" viewBox="0 0 128 129" fill="none">
      <circle cx="64" cy="64.500" r="60" stroke="#246d55" strokeOpacity=".5" strokeWidth="8" />
      <g stroke="#ff6d55" strokeOpacity=".5">
        <path d="M24.500 53V31.500h37V53" strokeWidth="3" />
        <path d="M23 56h40" strokeWidth="6" /><path d="M36 61h13" strokeWidth="4" />
        <path d="M67.500 91V69.500h37V91" strokeWidth="3" />
        <path d="M66 94h40" strokeWidth="6" /><path d="M79 99h13" strokeWidth="4" />
        <path d="M42.500 67v13.500h23M65 44.500h20.500v25" strokeWidth="3" strokeDasharray="3 3" />
      </g>
    </Halo>
    <Pointer width="20" height="26" viewBox="0 0 20 26">
      <circle cx="5" cy="5" r="3" fill="#fff" stroke="#000" strokeWidth="2" />
      <path d="M7 8v15l3.500-3 2.500 5 2.500-1.200-2.500-4.500h4.500z" fill="#fff" stroke="#222" />
    </Pointer>
  </Screen>
);

export default function App() {
  return (
    <Page>
      <Global />
      <Chrome />
      <SessionBars />
      <Main>
        <Stage><PosScreen /></Stage>
        <Chat>
          <ChatHead>
            <S w={19} h={20} stroke="#fff" strokeWidth="2"><rect width="9" height="20" rx="2" fill="#fff" stroke="none" /><path d="M9 10h8M13 5l5 5-5 5" /></S>
            <ChatTitle>Everyone</ChatTitle>
          </ChatHead>
          <ChatLog>
            <Message>{"(18:16:53) Patricio Calacasan can now view\nand control the customer's screen."}</Message>
          </ChatLog>
          <Rule />
          <Composer>...</Composer>
          <Send>SEND</Send>
        </Chat>
      </Main>
    </Page>
  );
}
